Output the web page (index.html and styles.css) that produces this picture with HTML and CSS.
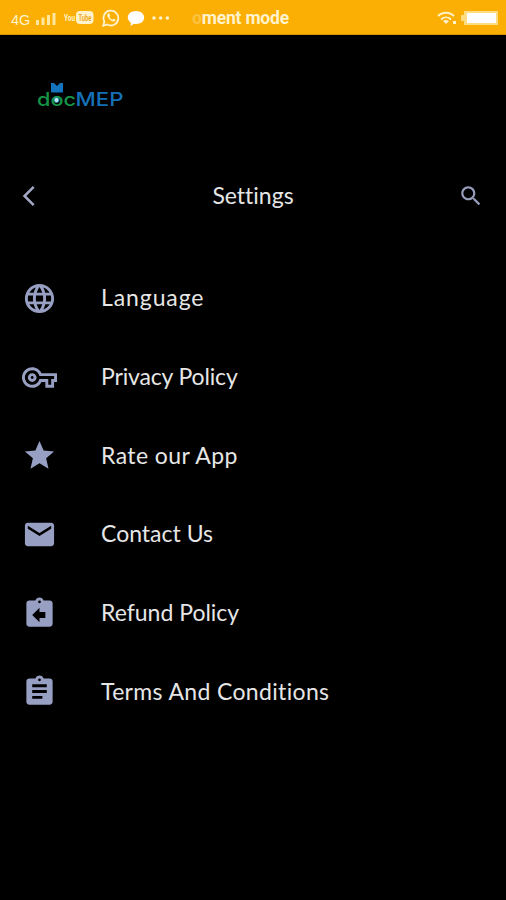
FILE: index.html
```
<!DOCTYPE html>
<html lang="en">
<head>
	<meta charset="UTF-8">
	<title>Settings</title>
	<link rel="stylesheet" href="styles.css">
</head>
<body>
	<div class="statusBar">
		<span class="network">4G</span>
		<svg class="signal" width="20" height="14" viewBox="0 0 20 14"><path d="M0 8h3v5H0zM5.500 5.500h3V13h-3zM11 3h3v10h-3zM16.500 1h3v12h-3z"/></svg>
		<svg class="youtube" width="30" height="14" viewBox="0 0 30 14">
			<rect x="12" y="0" width="17.500" height="13" rx="4"/>
			<text x="0" y="10" font-size="9" textLength="11" lengthAdjust="spacingAndGlyphs">You</text>
			<text class="tube" x="14.500" y="10" font-size="9" textLength="13" lengthAdjust="spacingAndGlyphs">Tube</text>
		</svg>
		<svg class="whatsapp" width="18" height="18" viewBox="0 0 18 18">
			<path class="ring" d="M1.200 16.800l1.200-4.200A7.400 7.400 0 1 1 5.300 15.500z"/>
			<path d="M6.200 4.500c-1.500 1-1.200 3 .8 5.300s4.400 3.700 6 2.200c.7-.7.6-1.200.1-1.500l-1.500-.8c-.5-.2-.8.900-1.200.8C9 10.100 7.800 8.800 7.500 7.900c.1-.4.900-.8.700-1.300l-.8-1.800c-.2-.4-.7-.6-1.200-.3z"/>
		</svg>
		<svg class="bubble" width="18" height="17" viewBox="0 0 18 17"><path d="M9 1c4.700 0 8.200 2.800 8.200 6.500S13.700 14 9 14c-.8 0-1.500-.1-2.200-.2L3.600 16l.2-3.500C1.900 11.300.8 9.500.8 7.500.8 3.800 4.300 1 9 1z"/></svg>
		<svg class="dots" width="18" height="4" viewBox="0 0 18 4"><circle cx="2" cy="2" r="1.800"/><circle cx="8.700" cy="2" r="1.800"/><circle cx="15.400" cy="2" r="1.800"/></svg>
		<span class="ticker"><span class="fade">o</span>ment mode</span>
		<svg class="wifi" width="20" height="14" viewBox="0 0 20 14">
			<path class="arc" d="M1 5.200c4.500-4.600 11.500-4.600 16 0M4 8.500c3-2.800 7-2.800 10 0"/>
			<path d="M9 13l-3-3c1.800-1.500 4.200-1.500 6 0zM16 10h3v3h-3z"/>
		</svg>
		<svg class="battery" width="38" height="16" viewBox="0 0 38 16">
			<path class="case" d="M0 5h3V1h34v14H3v-4H0z"/>
			<rect class="level" x="6" y="3" width="29" height="10"/>
		</svg>
	</div>

	<div class="brand">
		<svg width="88" height="28" viewBox="0 0 88 28">
			<path class="blue" d="M14 1h3l3 3 3-3h3v9.500H14z"/>
			<text class="doc" x="0" y="23.500" textLength="39" lengthAdjust="spacingAndGlyphs">doc</text>
			<text class="mep" x="38.500" y="23.500" textLength="48" lengthAdjust="spacingAndGlyphs">MEP</text>
			<circle class="lens" cx="19.500" cy="18" r="2.500"/>
		</svg>
	</div>

	<div class="header">
		<svg class="back" width="14" height="22" viewBox="0 0 14 22"><path d="M11.700 1.800L2.500 11l9.200 9.200"/></svg>
		<div class="title">Settings</div>
		<svg class="search" width="26" height="26" viewBox="0 0 24 24"><path d="M15.500 14h-.79l-.28-.27C15.410 12.590 16 11.110 16 9.500 16 5.910 13.090 3 9.500 3S3 5.910 3 9.500 5.910 16 9.500 16c1.610 0 3.090-.59 4.230-1.570l.27.28v.79l5 4.990L20.490 19l-4.990-5zm-6 0C7.010 14 5 11.990 5 9.500S7.010 5 9.500 5 14 7.010 14 9.500 11.990 14 9.500 14z"/></svg>
	</div>

	<div class="menu">
		<div class="item">
			<svg class="icon" viewBox="0 0 24 24"><path d="M11.990 2C6.470 2 2 6.480 2 12s4.470 10 9.990 10C17.520 22 22 17.520 22 12S17.520 2 11.990 2zm6.930 6h-2.950c-.32-1.250-.78-2.450-1.380-3.560 1.840.63 3.370 1.910 4.330 3.560zM12 4.040c.83 1.200 1.480 2.530 1.910 3.960h-3.820c.43-1.430 1.080-2.760 1.910-3.960zM4.260 14C4.100 13.360 4 12.690 4 12s.1-1.360.26-2h3.380c-.08.66-.14 1.320-.14 2s.06 1.340.14 2H4.260zm.82 2h2.950c.32 1.250.78 2.450 1.380 3.560-1.840-.63-3.370-1.900-4.330-3.560zm2.950-8H5.080c.96-1.660 2.490-2.930 4.330-3.560C8.810 5.550 8.350 6.750 8.030 8zM12 19.960c-.83-1.200-1.480-2.530-1.910-3.960h3.820c-.43 1.430-1.080 2.760-1.910 3.960zM14.340 14H9.660c-.09-.66-.16-1.320-.16-2s.07-1.350.16-2h4.680c.09.65.16 1.320.16 2s-.07 1.340-.16 2zm.25 5.560c.6-1.110 1.060-2.310 1.380-3.560h2.950c-.96 1.650-2.490 2.930-4.330 3.560zM16.360 14c.08-.66.14-1.320.14-2s-.06-1.340-.14-2h3.380c.16.64.26 1.310.26 2s-.1 1.360-.26 2h-3.380z"/></svg>
			<span class="label language">Language</span>
		</div>
		<div class="item">
			<svg class="icon" viewBox="0 0 24 24"><path d="M22 19h-6v-4h-2.680c-1.140 2.420-3.600 4-6.320 4-3.860 0-7-3.140-7-7s3.140-7 7-7c2.720 0 5.170 1.580 6.320 4H24v6h-2v4zm-4-2h2v-4h2v-2H11.940l-.23-.67C11.010 8.340 9.110 7 7 7c-2.760 0-5 2.240-5 5s2.240 5 5 5c2.110 0 4.010-1.340 4.710-3.330l.23-.67H18v4zM7 15c-1.650 0-3-1.350-3-3s1.350-3 3-3 3 1.350 3 3-1.350 3-3 3zm0-4c-.55 0-1 .45-1 1s.45 1 1 1 1-.45 1-1-.45-1-1-1z"/></svg>
			<span class="label privacy">Privacy Policy</span>
		</div>
		<div class="item">
			<svg class="icon" viewBox="0 0 24 24"><path d="M12 17.270L18.180 21l-1.640-7.030L22 9.240l-7.190-.61L12 2 9.190 8.630 2 9.240l5.460 4.730L5.820 21z"/></svg>
			<span class="label rate">Rate our App</span>
		</div>
		<div class="item">
			<svg class="icon" viewBox="0 0 24 24"><path d="M20 4H4c-1.100 0-1.990.9-1.990 2L2 18c0 1.100.9 2 2 2h16c1.100 0 2-.9 2-2V6c0-1.100-.9-2-2-2zm0 4l-8 5-8-5V6l8 5 8-5v2z"/></svg>
			<span class="label contact">Contact Us</span>
		</div>
		<div class="item">
			<svg class="icon" viewBox="0 0 24 24"><path d="M19 3h-4.180C14.400 1.840 13.300 1 12 1c-1.300 0-2.400.84-2.820 2H5c-1.100 0-2 .9-2 2v14c0 1.100.9 2 2 2h14c1.100 0 2-.9 2-2V5c0-1.100-.9-2-2-2zm-7 0c.55 0 1 .45 1 1s-.45 1-1 1-1-.45-1-1 .45-1 1-1zm4 12h-4v3l-5-5 5-5v3h4v4z"/></svg>
			<span class="label refund">Refund Policy</span>
		</div>
		<div class="item">
			<svg class="icon" viewBox="0 0 24 24"><path d="M19 3h-4.180C14.400 1.840 13.300 1 12 1c-1.300 0-2.400.84-2.820 2H5c-1.100 0-2 .9-2 2v14c0 1.100.9 2 2 2h14c1.100 0 2-.9 2-2V5c0-1.100-.9-2-2-2zm-7 0c.55 0 1 .45 1 1s-.45 1-1 1-1-.45-1-1 .45-1 1-1zm2 14H7v-2h7v2zm3-4H7v-2h10v2zm0-4H7V7h10v2z"/></svg>
			<span class="label terms">Terms And Conditions</span>
		</div>
	</div>
</body>
</html>
```
FILE: styles.css
```
html, body {
	height: 100%;
	margin: 0;
	padding: 0;
}
body {
	background: #000;
	color: #e6e6e6;
	font-family: Lato, "Open Sans", sans-serif;
	font-variant-ligatures: none;
	overflow: hidden;
}
svg {
	display: block;
	flex: none;
}
.statusBar {
	display: flex;
	align-items: center;
	box-sizing: border-box;
	height: 35px;
	padding: 2px 7px 0 11px;
	background: #fbae03;
	border-bottom: 1px solid #d79504;
	color: #fff3cd;
	fill: #fff3cd;
	font-family: Roboto, sans-serif;
}
.network {
	width: 20px;
	padding-top: 3px;
	font-family: "Liberation Sans", sans-serif;
	font-size: 14.5px;
}
.signal {
	margin: 2px 0 0 5px;
	fill: #ffe7a0;
}
.youtube {
	margin-left: 8px;
	font-weight: bold;
}
.tube {
	fill: #f0a91c;
}
.whatsapp {
	margin-left: 8px;
}
.ring, .arc {
	fill: none;
	stroke: #fff3cd;
	stroke-width: 1.8;
}
.bubble {
	margin-left: 7px;
	fill: #fff;
}
.dots {
	margin-left: 7px;
}
.ticker {
	margin-left: 22px;
	font-size: 17.5px;
	font-weight: bold;
	letter-spacing: -0.2px;
	white-space: nowrap;
}
.fade {
	opacity: 0.3;
}
.wifi {
	margin-left: auto;
}
.battery {
	margin-left: 4px;
}
.case {
	fill: #ffdc82;
}
.level {
	fill: #fff;
}
.brand {
	padding: 47px 0 0 37px;
}
.blue {
	fill: #1373bd;
}
.doc, .mep {
	font-family: Inter, sans-serif;
	font-size: 18px;
	font-weight: 500;
}
.doc {
	fill: #159447;
}
.mep {
	fill: #1570b8;
}
.lens {
	fill: #c5e6ee;
	stroke: #178aa0;
	stroke-width: 1;
}
.header {
	display: flex;
	align-items: center;
	justify-content: space-between;
	height: 50px;
	margin-top: 61px;
	padding: 0 22px;
}
.back {
	fill: none;
	stroke: #a3a8c3;
	stroke-width: 2.5;
}
.title {
	padding: 0 0 3px 12px;
	font-size: 23px;
}
.search {
	fill: #979dbb;
}
.menu {
	margin-top: 38px;
}
.item {
	display: flex;
	align-items: center;
	height: 78.7px;
	padding-left: 22px;
}
.icon {
	width: 35px;
	height: 35px;
	fill: #979fc3;
}
.label {
	margin-left: 44px;
	padding-bottom: 2px;
	font-size: 23px;
	line-height: 28px;
	white-space: nowrap;
}
.language {
	letter-spacing: 0.9px;
}
.privacy {
	letter-spacing: -0.15px;
}
.rate {
	letter-spacing: 0.4px;
}
.terms {
	letter-spacing: 0.35px;
}
```
